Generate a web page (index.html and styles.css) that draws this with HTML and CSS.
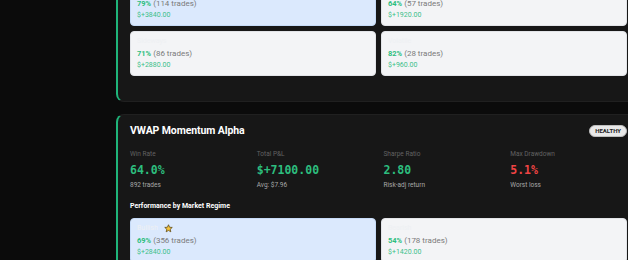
FILE: index.html
```html
<!DOCTYPE html>
<html lang="en">
<head>
    <meta charset="UTF-8">
    <meta name="viewport" content="width=device-width, initial-scale=1.0">
    <title>Strategy Health</title>
    <link rel="stylesheet" href="styles.css">
</head>
<body>
    <div class="list">
        <!-- Previous strategy (scrolled past) -->
        <div class="card card-top">
            <h3>Performance by Market Regime</h3>
            <div class="regimes">
                <div class="regime best">
                    <div class="regime-name">Bullish</div>
                    <div class="regime-stats"><span class="pct">79%</span> <span class="trades">(114 trades)</span></div>
                    <div class="regime-pnl">$+3840.00</div>
                </div>
                <div class="regime">
                    <div class="regime-name">Bearish</div>
                    <div class="regime-stats"><span class="pct">64%</span> <span class="trades">(57 trades)</span></div>
                    <div class="regime-pnl">$+1920.00</div>
                </div>
                <div class="regime">
                    <div class="regime-name">Sideways</div>
                    <div class="regime-stats"><span class="pct">71%</span> <span class="trades">(86 trades)</span></div>
                    <div class="regime-pnl">$+2880.00</div>
                </div>
                <div class="regime">
                    <div class="regime-name">Volatile</div>
                    <div class="regime-stats"><span class="pct">82%</span> <span class="trades">(28 trades)</span></div>
                    <div class="regime-pnl">$+960.00</div>
                </div>
            </div>
        </div>

        <!-- VWAP Momentum Alpha -->
        <div class="card">
            <div class="card-head">
                <h2>VWAP Momentum Alpha</h2>
                <span class="badge">HEALTHY</span>
            </div>
            <div class="stats">
                <div class="stat">
                    <div class="stat-label">Win Rate</div>
                    <div class="stat-value">64.0%</div>
                    <div class="stat-sub">892 trades</div>
                </div>
                <div class="stat">
                    <div class="stat-label">Total P&amp;L</div>
                    <div class="stat-value">$+7100.00</div>
                    <div class="stat-sub">Avg: $7.96</div>
                </div>
                <div class="stat">
                    <div class="stat-label">Sharpe Ratio</div>
                    <div class="stat-value">2.80</div>
                    <div class="stat-sub">Risk-adj return</div>
                </div>
                <div class="stat">
                    <div class="stat-label">Max Drawdown</div>
                    <div class="stat-value red">5.1%</div>
                    <div class="stat-sub">Worst loss</div>
                </div>
            </div>
            <h3>Performance by Market Regime</h3>
            <div class="regimes">
                <div class="regime best">
                    <div class="regime-name">Bullish
                        <svg class="star" viewBox="0 0 24 24" width="9" height="9"><path d="M12 2l2.9 6.6 7.1.6-5.4 4.7 1.6 7-6.2-3.8-6.2 3.8 1.6-7L2 9.2l7.1-.6z" fill="#f4c23c" stroke="#5a4510" stroke-width="2" stroke-linejoin="round"/></svg>
                    </div>
                    <div class="regime-stats"><span class="pct">69%</span> <span class="trades">(356 trades)</span></div>
                    <div class="regime-pnl">$+2840.00</div>
                </div>
                <div class="regime">
                    <div class="regime-name">Bearish</div>
                    <div class="regime-stats"><span class="pct">54%</span> <span class="trades">(178 trades)</span></div>
                    <div class="regime-pnl">$+1420.00</div>
                </div>
            </div>
        </div>
    </div>
</body>
</html>
```

FILE: styles.css
```css
body {
    margin: 0;
    background-color: #0b0b0b;
    font-family: Roboto, "Liberation Sans", sans-serif;
    color: #fff;
    overflow: hidden;
}
.list {
    width: 525px;
    margin-left: 116px;
    margin-top: -56px;
}
.card {
    background-color: #171717;
    border: 1px solid #202020;
    border-left: 2px solid #1fb57a;
    border-radius: 8px;
    padding: 9px 13px 25px 12px;
    margin-bottom: 12px;
}
.card-head {
    display: flex;
    justify-content: space-between;
    align-items: center;
    height: 14px;
}
h2 {
    margin: 0;
    font-size: 10.5px;
    font-weight: 700;
    letter-spacing: -0.1px;
    line-height: 14px;
}
.badge {
    background-color: #e8e8e8;
    color: #222;
    border: 1px solid #bdbdbd;
    border-radius: 8px;
    font-size: 6px;
    font-weight: 700;
    padding: 1px 5px;
    line-height: 8px;
}
.stats {
    display: grid;
    grid-template-columns: repeat(4, 1fr);
    gap: 10px;
    margin-top: 10px;
}
.stat-label {
    font-size: 6.5px;
    color: #626262;
    line-height: 12px;
}
.stat-value {
    font-family: "DejaVu Sans Mono", monospace;
    font-weight: 700;
    font-size: 11.5px;
    color: #2dbe7e;
    line-height: 18px;
    margin-top: 1px;
}
.stat-value.red {
    color: #ef4444;
}
.stat-sub {
    font-size: 6.5px;
    color: #a8a8a8;
    line-height: 12px;
}
h3 {
    margin: 9px 0 0;
    font-size: 7px;
    font-weight: 700;
    line-height: 12px;
}
.regimes {
    display: grid;
    grid-template-columns: 1fr 1fr;
    gap: 5px;
    margin-top: 6px;
}
.regime {
    background-color: #f3f4f6;
    border: 1px solid #e2e4e8;
    border-radius: 4px;
    padding: 3px 6px 5px;
}
.regime.best {
    background-color: #dbe9fd;
    border-color: #c6dbf7;
}
.regime-name {
    font-size: 7px;
    color: #eef0f3;
    line-height: 12px;
    display: flex;
    align-items: center;
    gap: 6px;
}
.regime-stats {
    line-height: 13px;
    font-size: 8px;
}
.pct {
    color: #2dbe7e;
    font-weight: 700;
    font-size: 7.5px;
}
.trades {
    color: #7a7a7a;
}
.regime-pnl {
    color: #3cc08a;
    font-size: 7px;
    line-height: 10px;
}
```
